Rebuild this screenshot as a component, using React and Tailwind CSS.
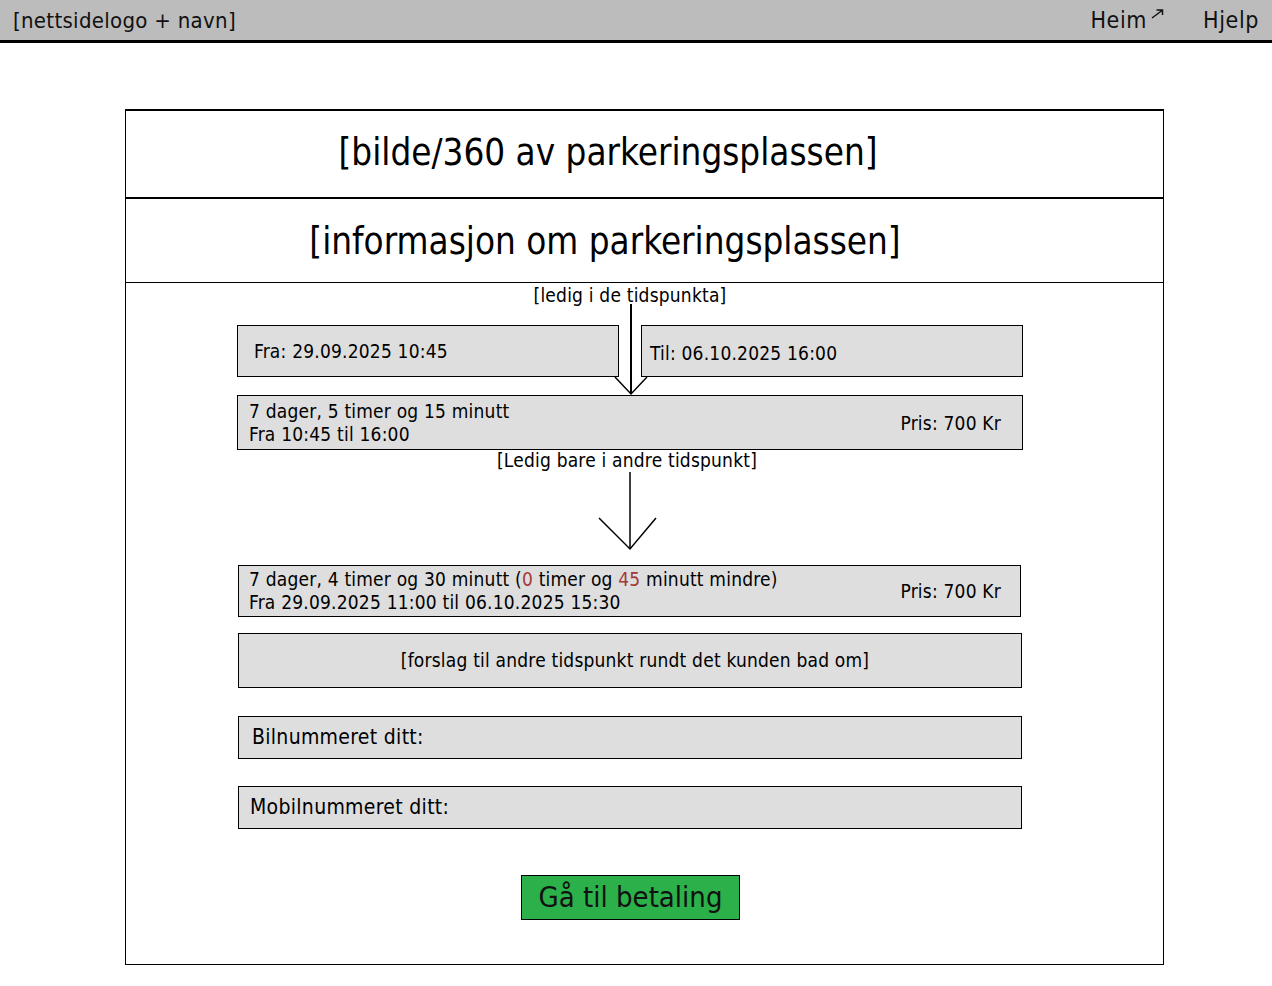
const font = { fontFamily: '"DejaVu Sans Condensed", "DejaVu Sans", sans-serif' };

function Header() {
  return (
    <div className="h-[43px] bg-[#bcbcbc] border-b-[3px] border-black flex items-center justify-between pl-[13px] pr-[13px] text-[#111]">
      <span className="text-[22px] tracking-[0.3px]">[nettsidelogo + navn]</span>
      <div className="flex items-center gap-[39px] text-[23px] tracking-[0.6px] leading-[34px]">
        <span className="flex items-start">
          Heim
          <svg width="13" height="10" viewBox="0 0 13 10" className="mt-[6px] ml-[4px]">
            <path d="M1 9 L11 1.5 M5.5 1 H11.5 V6" fill="none" stroke="#111" strokeWidth="1.5" />
          </svg>
        </span>
        <span>Hjelp</span>
      </div>
    </div>
  );
}

function Box({ className, children }) {
  return (
    <div className={"bg-[#dedede] border border-black " + className}>{children}</div>
  );
}

export default function App() {
  return (
    <div className="min-h-screen bg-white text-black" style={font}>
      <Header />

      <div className="mt-[66px] ml-[125px] w-[1039px] border border-black border-t-2">
        <div className="h-[88px] flex items-center justify-center border-b-2 border-black text-[36.5px] pb-[2px]">
          <span className="mr-[73px]">[bilde/360 av parkeringsplassen]</span>
        </div>
        <div className="h-[84px] flex items-center justify-center border-b border-black text-[36.5px] pt-[3px]">
          <span className="mr-[79px]">[informasjon om parkeringsplassen]</span>
        </div>

        <div className="relative h-[681px] text-[19px] tracking-[0.2px]">
          <svg className="absolute left-0 top-0 pointer-events-none" width="1037" height="681">
            <g fill="none" stroke="#000">
              <path d="M505 21 V111" strokeWidth="2" />
              <path d="M489 94 L505 111 L521 94" strokeWidth="1.5" />
              <path d="M504 189 V266" strokeWidth="1.5" />
              <path d="M473 235 L504 266 L530 235" strokeWidth="1.5" />
            </g>
          </svg>

          <div className="ml-[111px] w-[786px] flex flex-col">
            <div className="text-center leading-[22px] pt-[1px]">[ledig i de tidspunkta]</div>

            <div className="mt-[19px] flex gap-[22px]">
              <Box className="w-[382px] h-[52px] flex items-center pl-[16px] pt-[1px]">
                Fra: 29.09.2025 10:45
              </Box>
              <Box className="w-[382px] h-[52px] flex items-center pl-[8px] pt-[4px]">
                Til: 06.10.2025 16:00
              </Box>
            </div>

            <Box className="mt-[18px] h-[55px] flex items-center justify-between pl-[11px] pr-[21px] leading-[23px]">
              <div>
                <div>7 dager, 5 timer og 15 minutt</div>
                <div>Fra 10:45 til 16:00</div>
              </div>
              <div className="pt-[2px]">Pris: 700 Kr</div>
            </Box>

            <div className="text-center leading-[20px]">
              <span className="mr-[6px]">[Ledig bare i andre tidspunkt]</span>
            </div>

            <Box className="mt-[95px] ml-[1px] w-[783px] h-[52px] flex items-center justify-between pl-[10px] pr-[19px] leading-[23px]">
              <div>
                <div>
                  7 dager, 4 timer og 30 minutt (<span className="text-[#a33a3a]">0</span> timer og{" "}
                  <span className="text-[#a33a3a]">45</span> minutt mindre)
                </div>
                <div>Fra 29.09.2025 11:00 til 06.10.2025 15:30</div>
              </div>
              <div>Pris: 700 Kr</div>
            </Box>

            <Box className="mt-[16px] ml-[1px] w-[784px] h-[55px] flex items-center justify-center">
              <span className="ml-[10px]">[forslag til andre tidspunkt rundt det kunden bad om]</span>
            </Box>

            <Box className="mt-[28px] ml-[1px] w-[784px] h-[43px] flex items-center pl-[13px] text-[21px] tracking-[0.3px]">
              Bilnummeret ditt:
            </Box>

            <Box className="mt-[27px] ml-[1px] w-[784px] h-[43px] flex items-center pl-[11px] text-[21px] tracking-[0.3px]">
              Mobilnummeret ditt:
            </Box>

            <div className="mt-[46px] flex justify-center">
              <button className="w-[219px] h-[45px] ml-[1px] bg-[#2bb04a] border border-black text-[29px] tracking-normal leading-none text-[#111]">
                Gå til betaling
              </button>
            </div>
          </div>
        </div>
      </div>
    </div>
  );
}
